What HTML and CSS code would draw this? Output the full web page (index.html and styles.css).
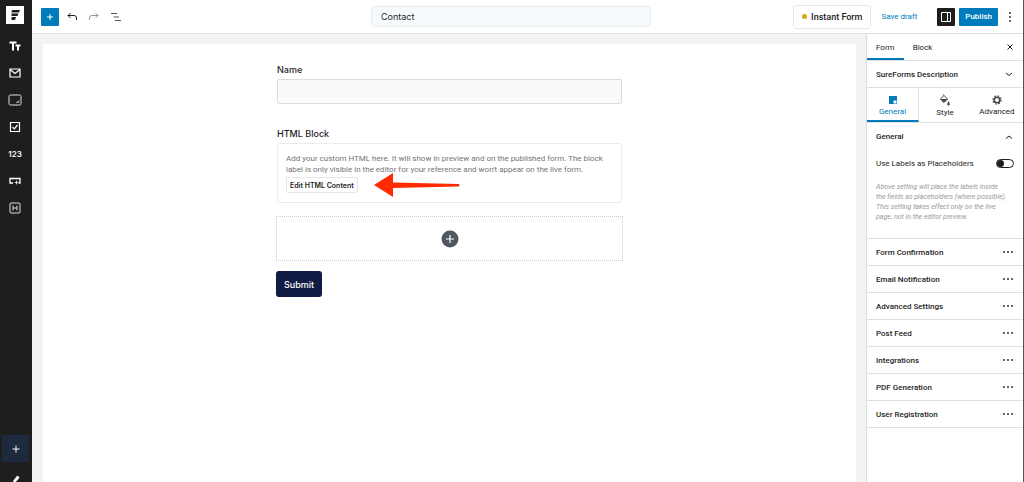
FILE: index.html
```
<!DOCTYPE html>
<html lang="en">
<head>
  <meta charset="UTF-8">
  <meta name="viewport" content="width=device-width, initial-scale=1.0">
  <title>Contact - Edit Form</title>
  <link rel="stylesheet" href="styles.css">
</head>
<body>
  <div class="editor">
    <!-- Quick block bar -->
    <nav class="rail" aria-label="Quick blocks">
      <a class="rail-logo" href="#" aria-label="Forms">
        <svg width="18" height="18" viewBox="0 0 18 18"><rect width="18" height="18" fill="#fff"/><path d="M6.500 4H14L13 6.500H5.500V5zM5.500 7.500H12.500L11.500 10H5.500zM5.500 11H10L9 14H5.500z" fill="#1e1e1e"/></svg>
      </a>
      <div class="rail-blocks">
        <button class="rail-btn" aria-label="Text">
          <svg width="14" height="14" viewBox="0 0 14 14"><path d="M1.500 3.500H8.500M5 3.500V11.500M7.500 6.500H12.500M10 6.500V11.500" fill="none" stroke="#fff" stroke-width="2"/></svg>
        </button>
        <button class="rail-btn" aria-label="Email">
          <svg width="14" height="14" viewBox="0 0 14 14"><path d="M2 3H12V11H2zM2 3.500L7 7.500L12 3.500" fill="none" stroke="#fff" stroke-width="1.200"/></svg>
        </button>
        <button class="rail-btn" aria-label="Textarea">
          <svg width="14" height="14" viewBox="0 0 14 14"><rect x="1" y="2" width="12" height="10" rx="1.500" fill="none" stroke="#ddd"/><path d="M8.500 10L11 7.500M10.300 10L11 9.300" stroke="#fff"/></svg>
        </button>
        <button class="rail-btn" aria-label="Checkbox">
          <svg width="14" height="14" viewBox="0 0 14 14"><path d="M2.500 2.500H11.500V11.500H2.500zM4.500 7L6.300 8.800L9.500 5" fill="none" stroke="#fff" stroke-width="1.200"/></svg>
        </button>
        <button class="rail-btn">123</button>
        <button class="rail-btn" aria-label="Button">
          <svg width="14" height="14" viewBox="0 0 14 14"><path d="M5 9H2V4.500H12V9H10.500" fill="none" stroke="#fff" stroke-width="1.300"/><path d="M8.500 6L9.100 7.900L11 8.500L9.100 9.100L8.500 11L7.900 9.100L6 8.500L7.900 7.900z" fill="#fff"/></svg>
        </button>
        <button class="rail-btn" aria-label="Hidden">
          <svg width="14" height="14" viewBox="0 0 14 14"><rect x="2" y="2" width="10" height="10" rx="1" fill="none" stroke="#ddd"/><path d="M5 4.500V9.500M9 4.500V9.500M5 7H9" stroke="#ddd"/></svg>
        </button>
      </div>
      <div class="rail-tools">
        <button class="rail-add" aria-label="Add block">
          <svg width="10" height="10" viewBox="0 0 10 10"><path d="M5 1.500V8.500M1.500 5H8.500" stroke="#fff"/></svg>
        </button>
        <button class="rail-btn" aria-label="Customize">
          <svg width="14" height="14" viewBox="0 0 14 14"><path d="M6 8L10.500 2.500" stroke="#fff" stroke-width="2.800"/><path d="M2.500 12L3.500 8L6.500 10z" fill="#fff"/></svg>
        </button>
      </div>
    </nav>

    <div class="workspace">
      <header class="topbar">
        <div class="topbar-left">
          <button class="btn-icon btn-blue" aria-label="Toggle block inserter">
            <svg width="10" height="10" viewBox="0 0 10 10"><path d="M5 2V8M2 5H8" stroke="#fff"/></svg>
          </button>
          <button class="btn-icon" aria-label="Undo">
            <svg width="12" height="12" viewBox="0 0 12 12"><path d="M4.500 2L2 4.500L4.500 7M2 4.500H8Q10.500 4.500 10.500 7V9" fill="none" stroke="#1e1e1e"/></svg>
          </button>
          <button class="btn-icon" aria-label="Redo">
            <svg width="12" height="12" viewBox="0 0 12 12"><path d="M7.500 2L10 4.500L7.500 7M10 4.500H4Q1.500 4.500 1.500 7V9" fill="none" stroke="#949494"/></svg>
          </button>
          <button class="btn-icon" aria-label="Document overview">
            <svg width="12" height="12" viewBox="0 0 12 12"><path d="M1 2.500H7M3.500 6H9M5 9.500H11" stroke="#555"/></svg>
          </button>
        </div>
        <input class="title-input" type="text" value="Contact" aria-label="Form title">
        <div class="topbar-right">
          <button class="btn-instant"><span class="dot"></span>Instant Form</button>
          <button class="btn-link">Save draft</button>
          <button class="btn-icon btn-dark" aria-label="Settings">
            <svg width="12" height="12" viewBox="0 0 12 12"><path d="M1.500 1.500H10.500V10.500H1.500zM7.500 1.500V10.500" fill="none" stroke="#fff"/></svg>
          </button>
          <button class="btn-publish">Publish</button>
          <button class="btn-more" aria-label="Options">
            <svg width="4" height="12" viewBox="0 0 4 12"><g fill="#1e1e1e"><circle cx="2" cy="2" r="0.900"/><circle cx="2" cy="6" r="0.900"/><circle cx="2" cy="10" r="0.900"/></g></svg>
          </button>
        </div>
      </header>

      <div class="content">
        <main class="canvas">
          <form class="form">
            <label class="field-label" for="name">Name</label>
            <input class="field-input" type="text" id="name">

            <h2 class="field-label">HTML Block</h2>
            <div class="html-block">
              <p>Add your custom HTML here. It will show in preview and on the published form. The block label is only visible in the editor for your reference and won't appear on the live form.</p>
              <div class="html-actions">
                <button class="btn-edit" type="button">Edit HTML Content</button>
                <svg class="arrow" width="86" height="24" viewBox="0 0 86 24"><path d="M0 12L19 0V9.500L85 11Q86 12 85 13.500L19 15V24z" fill="#ff2a00"/></svg>
              </div>
            </div>

            <button class="appender" type="button" aria-label="Add block">
              <svg width="18" height="18" viewBox="0 0 18 18"><circle cx="9" cy="9" r="8.500" fill="#50575e"/><path d="M9 5V13M5 9H13" stroke="#fff" stroke-width="1.200"/></svg>
            </button>
            <button class="btn-submit" type="button">Submit</button>
          </form>
        </main>

        <!-- Settings sidebar -->
        <aside class="inspector">
          <div class="tabs">
            <button class="tab active">Form</button>
            <button class="tab">Block</button>
            <button class="tab-close" aria-label="Close settings">
              <svg width="8" height="8" viewBox="0 0 8 8"><path d="M1.500 1.500L6.500 6.500M6.500 1.500L1.500 6.500" stroke="#1e1e1e"/></svg>
            </button>
          </div>
          <button class="row">SureForms Description
            <svg width="8" height="8" viewBox="0 0 8 8"><path d="M1 3L4 5.500L7 3" fill="none" stroke="#1e1e1e"/></svg>
          </button>
          <div class="icon-tabs">
            <button class="icon-tab active">
              <svg width="10" height="10" viewBox="0 0 10 10"><path d="M1 1H9V9H1z" fill="#007cba"/><path d="M5.500 5.500H8.500V8.500H5.500z" fill="#fff"/></svg>
              General
            </button>
            <button class="icon-tab">
              <svg width="12" height="12" viewBox="0 0 12 12"><path d="M4 0.500L8.500 5L5 8.500L1.300 5L5 1.500" fill="none" stroke="#444"/><path d="M1.500 5H8.500L5 8.500z" fill="#444"/><path d="M9.500 7Q12 11.500 9.500 11.500Q7 11.500 9.500 7z" fill="#444"/></svg>
              Style
            </button>
            <button class="icon-tab">
              <svg width="10" height="10" viewBox="0 0 10 10"><circle cx="5" cy="5" r="2.800" fill="none" stroke="#444" stroke-width="1.600"/><circle cx="5" cy="5" r="4.100" fill="none" stroke="#444" stroke-width="1.200" stroke-dasharray="1.600 1.620"/></svg>
              Advanced
            </button>
          </div>
          <section class="panel">
            <button class="row row-open">General
              <svg width="8" height="8" viewBox="0 0 8 8"><path d="M1 5.500L4 3L7 5.500" fill="none" stroke="#1e1e1e"/></svg>
            </button>
            <div class="toggle-row">
              <label for="labels">Use Labels as Placeholders</label>
              <input class="toggle" type="checkbox" id="labels">
            </div>
            <p class="help">Above setting will place the labels inside<br>the fields as placeholders (where possible).<br>This setting takes effect only on the live<br>page, not in the editor preview.</p>
          </section>
          <button class="row">Form Confirmation
            <svg class="dots" width="10" height="2" viewBox="0 0 10 2"><circle cx="1" cy="1" r="0.900"/><circle cx="5" cy="1" r="0.900"/><circle cx="9" cy="1" r="0.900"/></svg>
          </button>
          <button class="row">Email Notification
            <svg class="dots" width="10" height="2" viewBox="0 0 10 2"><circle cx="1" cy="1" r="0.900"/><circle cx="5" cy="1" r="0.900"/><circle cx="9" cy="1" r="0.900"/></svg>
          </button>
          <button class="row">Advanced Settings
            <svg class="dots" width="10" height="2" viewBox="0 0 10 2"><circle cx="1" cy="1" r="0.900"/><circle cx="5" cy="1" r="0.900"/><circle cx="9" cy="1" r="0.900"/></svg>
          </button>
          <button class="row">Post Feed
            <svg class="dots" width="10" height="2" viewBox="0 0 10 2"><circle cx="1" cy="1" r="0.900"/><circle cx="5" cy="1" r="0.900"/><circle cx="9" cy="1" r="0.900"/></svg>
          </button>
          <button class="row">Integrations
            <svg class="dots" width="10" height="2" viewBox="0 0 10 2"><circle cx="1" cy="1" r="0.900"/><circle cx="5" cy="1" r="0.900"/><circle cx="9" cy="1" r="0.900"/></svg>
          </button>
          <button class="row">PDF Generation
            <svg class="dots" width="10" height="2" viewBox="0 0 10 2"><circle cx="1" cy="1" r="0.900"/><circle cx="5" cy="1" r="0.900"/><circle cx="9" cy="1" r="0.900"/></svg>
          </button>
          <button class="row">User Registration
            <svg class="dots" width="10" height="2" viewBox="0 0 10 2"><circle cx="1" cy="1" r="0.900"/><circle cx="5" cy="1" r="0.900"/><circle cx="9" cy="1" r="0.900"/></svg>
          </button>
        </aside>
      </div>
    </div>
  </div>
</body>
</html>
```
FILE: styles.css
```
* {
  margin: 0;
  padding: 0;
  box-sizing: border-box;
}

body {
  font-family: Roboto, "Liberation Sans", sans-serif;
  font-size: 8px;
  color: #1e1e1e;
  background-color: #fff;
  overflow: hidden;
}

button,
input {
  font: inherit;
  color: inherit;
  border: none;
  background: none;
}

button {
  cursor: pointer;
}

svg {
  display: block;
  flex-shrink: 0;
}

.editor {
  display: flex;
  height: 100vh;
  border-right: 1px solid #555;
}

/* Left rail */
.rail {
  width: 32px;
  flex-shrink: 0;
  display: flex;
  flex-direction: column;
  background-color: #1e1e1e;
  color: #fff;
  overflow: hidden;
}

.rail-logo {
  padding: 6px;
}

.rail-blocks {
  display: flex;
  flex-direction: column;
  padding-top: 2px;
}

.rail-btn {
  width: 30px;
  height: 27px;
  flex-shrink: 0;
  display: flex;
  align-items: center;
  justify-content: center;
  font-family: Inter, sans-serif;
  font-size: 8px;
  font-weight: 600;
}

.rail-tools {
  height: 47px;
  flex-shrink: 0;
  margin-top: auto;
}

.rail-add {
  width: 27px;
  height: 27px;
  margin: 0 2px 5px;
  display: flex;
  align-items: center;
  justify-content: center;
  background-color: #1d2a3d;
}

.workspace {
  flex: 1;
  min-width: 0;
  display: flex;
  flex-direction: column;
}

/* Top bar */
.topbar {
  height: 34px;
  flex-shrink: 0;
  display: grid;
  grid-template-columns: 10fr 280px 11fr;
  align-items: center;
  padding: 0 9px;
  border-bottom: 1px solid #e0e0e0;
}

.topbar-left {
  display: flex;
  align-items: center;
  gap: 4px;
}

.btn-icon {
  width: 18px;
  height: 18px;
  display: flex;
  align-items: center;
  justify-content: center;
  border-radius: 1px;
}

.btn-blue {
  background-color: #007cba;
}

.btn-dark {
  background-color: #1e1e1e;
}

.title-input {
  width: 280px;
  height: 21px;
  padding: 0 9px;
  border: 1px solid #e3edf2;
  border-radius: 4px;
  background-color: #f6fafd;
  font-family: Inter, sans-serif;
  font-size: 9px;
}

.topbar-right {
  display: flex;
  align-items: center;
  justify-content: flex-end;
}

.btn-instant {
  height: 24px;
  padding: 0 8px;
  display: flex;
  align-items: center;
  gap: 4px;
  border: 1px solid #e8e8e8;
  border-radius: 3px;
  font-size: 9px;
  font-weight: 500;
}

.dot {
  width: 5px;
  height: 5px;
  border-radius: 50%;
  background-color: #dba617;
}

.btn-link {
  margin: 0 20px 0 10px;
  color: #007cba;
}

.btn-publish {
  height: 18px;
  margin: 0 8px 0 4px;
  padding: 0 6px;
  border-radius: 1px;
  background-color: #007cba;
  color: #fff;
  font-weight: 500;
}

.btn-more {
  width: 8px;
  display: flex;
  justify-content: center;
}

/* Canvas */
.content {
  flex: 1;
  min-height: 0;
  display: flex;
}

.canvas {
  flex: 1;
  padding: 10px 10px 0 11px;
  background-color: #f3f3f3;
}

.form {
  height: 100%;
  padding: 20px 233px;
  display: flex;
  flex-direction: column;
  background-color: #fff;
}

.field-label {
  margin: 0 1px 4px;
  font-family: Inter, sans-serif;
  font-size: 9px;
  line-height: 11px;
  font-weight: 500;
}

.field-input {
  height: 25px;
  margin: 0 1px 24px;
  padding: 0 6px;
  border: 1px solid #dcdcdc;
  border-radius: 2px;
  background-color: #fafafa;
}

.html-block {
  margin: 0 1px 13px;
  padding: 9px 8px 7px;
  border: 1px solid #ebebeb;
  border-radius: 3px;
  color: #757575;
  line-height: 11px;
}

.html-actions {
  display: flex;
  align-items: center;
  gap: 16px;
}

.btn-edit {
  height: 16px;
  padding: 0 3px;
  border: 1px solid #e6e6e6;
  border-radius: 2px;
  color: #1e1e1e;
  font-family: Inter, sans-serif;
  font-size: 7px;
  font-weight: 600;
}

.arrow {
  margin: -2px 0;
}

.appender {
  height: 45px;
  display: flex;
  align-items: center;
  justify-content: center;
  border: 1px dotted #ccc;
}

.btn-submit {
  align-self: flex-start;
  height: 26px;
  margin-top: 10px;
  padding: 0 8px;
  border-radius: 3px;
  background-color: #111c44;
  color: #fff;
  font-family: Inter, sans-serif;
  font-size: 9px;
  font-weight: 500;
}

/* Inspector */
.inspector {
  width: 157px;
  flex-shrink: 0;
  border-left: 1px solid #ddd;
}

.tabs {
  height: 27px;
  display: flex;
  border-bottom: 1px solid #e0e0e0;
}

.tab {
  padding: 2px 9px 0;
  border-bottom: 2px solid transparent;
}

.tab.active {
  border-color: #007cba;
}

.tab-close {
  margin-left: auto;
  padding: 0 9px;
}

.row {
  width: 100%;
  height: 27px;
  padding: 0 10px 0 9px;
  display: flex;
  align-items: center;
  justify-content: space-between;
  border-bottom: 1px solid #e0e0e0;
  font-weight: 500;
}

.row-open {
  border-bottom: none;
}

.icon-tabs {
  height: 35px;
  display: grid;
  grid-template-columns: repeat(3, 1fr);
  border-bottom: 1px solid #e0e0e0;
}

.icon-tab {
  padding-top: 2px;
  display: flex;
  flex-direction: column;
  align-items: center;
  justify-content: center;
  gap: 2px;
  border-bottom: 2px solid transparent;
}

.icon-tab.active {
  border-right: 1px solid #e0e0e0;
  border-bottom-color: #007cba;
  color: #007cba;
}

.panel {
  padding-bottom: 16px;
  border-bottom: 1px solid #e0e0e0;
}

.toggle-row {
  height: 27px;
  padding: 0 9px;
  display: flex;
  align-items: center;
  justify-content: space-between;
}

.toggle {
  appearance: none;
  width: 18px;
  height: 9px;
  border: 1px solid #1e1e1e;
  border-radius: 5px;
}

.toggle::before {
  content: "";
  display: block;
  width: 7px;
  height: 7px;
  border-radius: 50%;
  background-color: #1e1e1e;
}

.help {
  padding: 5px 9px 0;
  color: #999;
  font-size: 7px;
  line-height: 10px;
  font-style: italic;
}

.dots {
  fill: #1e1e1e;
}
```
